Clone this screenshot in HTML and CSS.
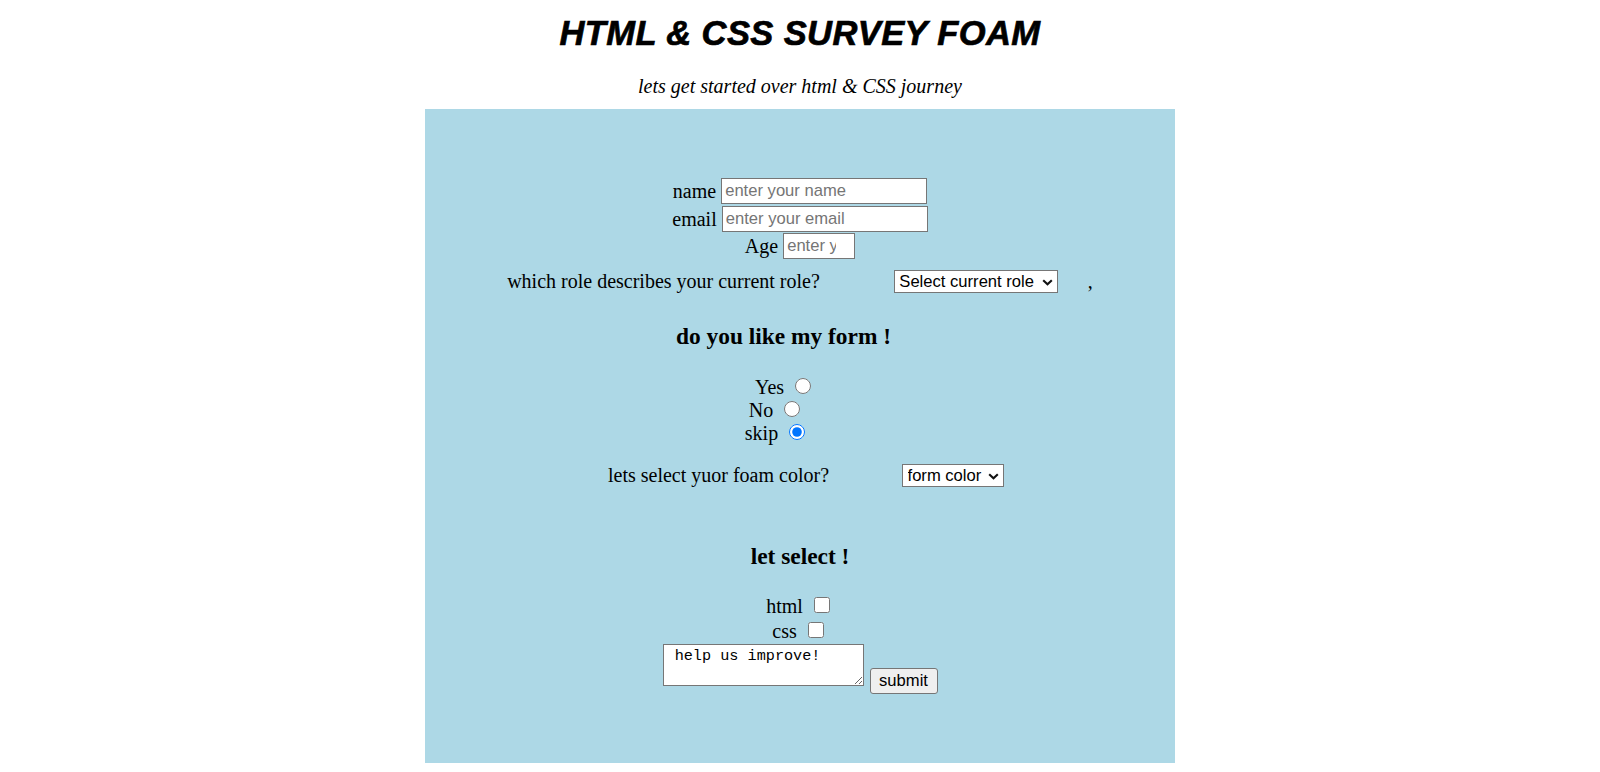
FILE: index.html
```html
<!DOCTYPE html>
<html lang="en">
<head>
<meta charset="utf-8">
<title>HTML &amp; CSS Survey Foam</title>
<link rel="stylesheet" href="styles.css">
</head>
<body>
  <h1 class="title">HTML &amp; CSS SURVEY FOAM</h1>
  <p class="subtitle">lets get started over html &amp; CSS journey</p>

  <form class="survey">
    <div class="field-row">
      <label class="lbl" for="name">name</label>
      <input class="text-input wide" id="name" type="text" placeholder="enter your name">
    </div>
    <div class="field-row row-email">
      <label class="lbl" for="email">email</label>
      <input class="text-input wide" id="email" type="email" placeholder="enter your email">
    </div>
    <div class="field-row row-age">
      <label class="lbl" for="age">Age</label>
      <input class="text-input narrow" id="age" type="number" placeholder="enter your age">
    </div>

    <div class="select-row role-row">
      <label class="lbl" for="role">which role describes your current role?</label>
      <span class="select-wrap role-select">
        <select id="role" class="dropdown">
          <option>Select current role</option>
          <option>Student</option>
          <option>Developer</option>
        </select>
        <svg class="chev" width="11" height="7" viewBox="0 0 11 7"><path d="M1.2 1.2 L5.5 5.3 L9.8 1.2" fill="none" stroke="#111" stroke-width="2.1"/></svg>
      </span>
      <span class="comma">,</span>
    </div>

    <h3 class="question like-q">do you like my form !</h3>
    <div class="choice-row yes-row">Yes <input class="radio" type="radio" name="like"></div>
    <div class="choice-row no-row">No <input class="radio" type="radio" name="like"></div>
    <div class="choice-row skip-row">skip <input class="radio" type="radio" name="like" checked></div>

    <div class="select-row color-row">
      <label class="lbl" for="color">lets select yuor foam color?</label>
      <span class="select-wrap color-select">
        <select id="color" class="dropdown">
          <option>form color</option>
          <option>blue</option>
          <option>green</option>
        </select>
        <svg class="chev" width="11" height="7" viewBox="0 0 11 7"><path d="M1.2 1.2 L5.5 5.3 L9.8 1.2" fill="none" stroke="#111" stroke-width="2.1"/></svg>
      </span>
    </div>

    <h3 class="question select-q">let select !</h3>
    <div class="check-row html-row">html <input class="check" type="checkbox"></div>
    <div class="check-row">css <input class="check" type="checkbox"></div>

    <div class="submit-row">
      <textarea class="comment"> help us improve!</textarea>
      <button class="submit-btn" type="submit">submit</button>
    </div>
  </form>
</body>
</html>
```

FILE: styles.css
```css
html, body {
  margin: 0;
  padding: 0;
}

body {
  font-family: "Liberation Serif", "Times New Roman", serif;
  font-size: 20px;
  color: #000;
  background: #fff;
}

.title {
  margin: 13px 0 0;
  font-family: "Liberation Sans", Arial, sans-serif;
  font-weight: 700;
  font-style: italic;
  font-size: 34.5px;
  letter-spacing: 0.4px;
  line-height: 40px;
  text-align: center;
  -webkit-text-stroke: 0.7px #000;
}

.subtitle {
  margin: 22px 0 0;
  font-style: italic;
  line-height: 23px;
  text-align: center;
}

.survey {
  width: 750px;
  height: 654px;
  margin: 11px auto 0;
  padding: 69px 0 0;
  background: #add8e6;
  box-sizing: border-box;
}

.lbl {
  line-height: 23px;
}

.field-row {
  display: flex;
  justify-content: center;
  align-items: center;
  gap: 5px;
  height: 26px;
}

.row-email {
  margin-top: 2px;
}

.row-age {
  margin-top: 1px;
}

.text-input {
  box-sizing: border-box;
  height: 26px;
  margin: 0;
  padding: 1px 3px;
  border: 1px solid #767676;
  border-radius: 0;
  background: #fff;
  font-family: "Liberation Sans", Arial, sans-serif;
  font-size: 16.6px;
  color: #000;
}

.text-input::placeholder {
  color: #757575;
}

.wide {
  width: 206px;
}

.narrow {
  width: 72px;
  padding-right: 18px;
  -moz-appearance: textfield;
}

.narrow::-webkit-inner-spin-button,
.narrow::-webkit-outer-spin-button {
  -webkit-appearance: none;
  margin: 0;
}

.select-row {
  display: flex;
  justify-content: center;
  align-items: center;
  height: 23px;
}

.role-row {
  margin-top: 11px;
}

.role-select {
  margin-left: 74px;
}

.comma {
  margin-left: 30px;
  line-height: 23px;
}

.color-row {
  margin-top: 19px;
  padding-left: 12px;
}

.color-select {
  margin-left: 73px;
}

.select-wrap {
  position: relative;
  display: inline-flex;
}

.dropdown {
  appearance: none;
  -webkit-appearance: none;
  box-sizing: border-box;
  height: 23px;
  margin: 0;
  padding: 0 18px 0 4.5px;
  border: 1px solid #767676;
  border-radius: 0;
  background: #fff;
  font-family: "Liberation Sans", Arial, sans-serif;
  font-size: 16.6px;
  color: #000;
}

.role-select .dropdown {
  width: 164px;
}

.color-select .dropdown {
  width: 102px;
}

.chev {
  position: absolute;
  right: 5px;
  top: 9px;
  pointer-events: none;
}

.question {
  margin: 0;
  font-size: 23.4px;
  font-weight: 700;
  line-height: 27px;
  text-align: center;
}

.like-q {
  margin-top: 30px;
  padding-right: 33px;
}

.select-q {
  margin-top: 56px;
}

.choice-row {
  height: 23px;
  line-height: 23px;
  text-align: center;
}

.yes-row {
  margin-top: 26px;
  padding-right: 30px;
}

.no-row {
  padding-right: 47px;
}

.skip-row {
  padding-right: 46px;
}

.radio,
.check {
  width: 16px;
  height: 16px;
  margin: 0 4px 0 6px;
  vertical-align: baseline;
}

.radio {
  accent-color: #0075ff;
}

.check-row {
  height: 25px;
  line-height: 25px;
  text-align: center;
}

.html-row {
  margin-top: 24px;
}

.submit-row {
  display: flex;
  justify-content: center;
  align-items: flex-start;
  gap: 6px;
}

.comment {
  box-sizing: border-box;
  width: 201px;
  height: 42px;
  margin: 0;
  padding: 2px;
  border: 1px solid #767676;
  border-radius: 0;
  background: #fff;
  font-family: "Liberation Mono", "Courier New", monospace;
  font-size: 15.2px;
  color: #000;
}

.submit-btn {
  box-sizing: border-box;
  width: 68px;
  height: 26px;
  margin: 24px 0 0;
  padding: 0;
  border: 1px solid #767676;
  border-radius: 3px;
  background: #efefef;
  font-family: "Liberation Sans", Arial, sans-serif;
  font-size: 16.6px;
  color: #000;
}
```
